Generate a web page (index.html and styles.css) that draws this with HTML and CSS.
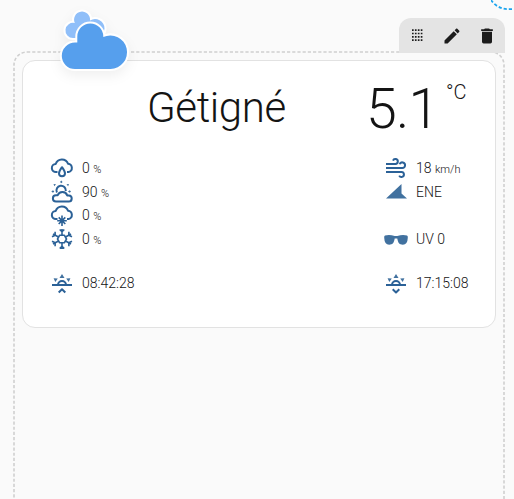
FILE: index.html
```
<!DOCTYPE html>
<html lang="fr">
<head>
  <meta charset="UTF-8" />
  <title>Météo</title>
  <link rel="stylesheet" href="styles.css">
</head>
<body>

<!-- Shared shapes -->
<svg class="defs" width="0" height="0">
  <defs>
    <path id="cloud" d="M7.5 16H6a4 4 0 0 1-.3-8A6.5 6.5 0 0 1 18 7.7 4.2 4.2 0 0 1 18.5 16H17" />
    <g id="sun-line">
      <path d="M2 14h20M8 14a4 4 0 0 1 8 0" />
      <path class="solid" d="M12 3l2.500 4H9.500zM3.600 7.300l4.200.3-2.500 3.500zM20.400 7.300l-4.200.3 2.500 3.500z" />
    </g>
  </defs>
</svg>

<svg class="add-section" width="23" height="11"><path d="M0 0A21 21 0 0 0 16 9.200H23" /></svg>

<div class="section">
  <svg class="outline" width="492" height="470"><rect x="1" y="1" width="490" height="520" rx="13" /></svg>

  <!-- Edit buttons -->
  <div class="toolbar">
    <svg width="20" height="20" viewBox="0 0 24 24"><path d="M6 4h2v2H6zM9.500 4h2v2h-2zM13 4h2v2h-2zM16.500 4h2v2h-2zM6 8h2v2H6zM9.500 8h2v2h-2zM13 8h2v2h-2zM16.500 8h2v2h-2zM6 12h2v2H6zM9.500 12h2v2h-2zM13 12h2v2h-2zM16.500 12h2v2h-2zM6 16h2v2H6zM9.500 16h2v2h-2zM13 16h2v2h-2zM16.500 16h2v2h-2z" /></svg>
    <svg width="20" height="20" viewBox="0 0 24 24"><path d="M20.71 7.04c.39-.39.39-1.04 0-1.41l-2.34-2.34c-.37-.39-1.02-.39-1.41 0l-1.84 1.83 3.75 3.75M3 17.25V21h3.75L17.81 9.93l-3.75-3.75z" /></svg>
    <svg width="20" height="20" viewBox="0 0 24 24"><path d="M19 4h-3.5l-1-1h-5l-1 1H5v2h14M6 19a2 2 0 0 0 2 2h8a2 2 0 0 0 2-2V7H6z" /></svg>
  </div>

  <div class="card">
    <svg class="weather" width="90" height="90" viewBox="0 0 90 90">
      <path class="back" d="M23 38a7.6 7.6 0 1 1 1.8-15A8 8 0 1 1 40 20.5 9.5 9.5 0 0 1 54.5 28.5 9.5 9.5 0 0 1 45 38z" />
      <path class="front" d="M25 69a13.200 13.200 0 0 1 0-26.400h2.300V36.500a13 13 0 0 1 26 0v.4a16.800 16.800 0 1 1 7.200 32.100z" />
    </svg>

    <div class="header">
      <div class="city">Gétigné</div>
      <div class="temp">5.1</div>
      <div class="unit">°C</div>
    </div>

    <div class="details">
      <ul class="left">
        <li>
          <svg class="icon" viewBox="0 0 24 24"><use href="#cloud" /><path d="M12 11.2c-1.8 2.5-3 4.1-3 6a3 3 0 0 0 6 0c0-1.9-1.2-3.5-3-6z" /></svg>
          <span>0 <small>%</small></span>
        </li>
        <li>
          <svg class="icon" viewBox="0 0 24 24"><path d="M6 21.500h12.500a3 3 0 0 0 .3-6.100h-1.600a5 5 0 0 0-9.500-.1H6a3.100 3.100 0 0 0 0 6.200zM6.900 12.500a4.700 4.700 0 1 1 8.900-1.500" /><path class="solid" d="M10 2l1.300-1.500L12.600 2l-1.300 1.300zM3.500 4l2.500.3-1.600 1.900zM19 4l-2.500.3 1.600 1.900zM1.300 11.500L3 10.200l1.300 1.300L3 12.800zM18 11.500l1.700-1.300 1.300 1.300-1.300 1.300z" /></svg>
          <span>90 <small>%</small></span>
        </li>
        <li>
          <svg class="icon" viewBox="0 0 24 24"><use href="#cloud" /><path class="thin" d="M12 12.500v10.500M7.200 17.700h9.600M8.700 14.400l6.600 6.600M15.300 14.400l-6.600 6.600" /></svg>
          <span>0 <small>%</small></span>
        </li>
        <li>
          <svg class="icon thin" viewBox="0 0 24 24"><path d="M12 2v6M12 16v6M3 7l5.500 3M15.500 14l5.500 3M3 17l5.500-3M15.500 10L21 7M9.700 8.200h4.600l2.200 3.800-2.200 3.800H9.700L7.500 12zM9.700 2.500L12 4.800l2.300-2.300M9.700 21.500l2.300-2.300 2.300 2.300M2 9.800l3.200-1.600-.1-3.500M22 9.800l-3.200-1.600.1-3.500M2 14.200l3.200 1.600-.1 3.500M22 14.200l-3.200 1.600.1 3.500" /></svg>
          <span>0 <small>%</small></span>
        </li>
        <li class="sun">
          <svg class="icon" viewBox="0 0 24 24"><use href="#sun-line" /><path d="M8.700 21.500L12 18.300l3.300 3.200" /></svg>
          <span>08:42:28</span>
        </li>
      </ul>

      <ul class="right">
        <li>
          <svg class="icon" viewBox="0 0 24 24"><path d="M2 8h9.500A2.500 2.500 0 1 0 9 4.600M2 12h16.300a2.800 2.800 0 1 0-2.700-3.700M2 16h15.500a2.500 2.500 0 1 1-2.300 3.600" /></svg>
          <span>18 <small>km/h</small></span>
        </li>
        <li>
          <svg class="icon filled" viewBox="0 0 24 24"><path d="M2 18.500L17.500 4v9.500L23 18.500z" /></svg>
          <span>ENE</span>
        </li>
        <li class="uv">
          <svg class="icon filled" viewBox="0 0 24 24"><path d="M1 8.500Q5.500 7.300 10.700 9h2.600Q18.500 7.300 23 8.500q1 .5.800 2.200-.3 7-4.900 7c-3.500 0-4.900-1.700-5.600-6.200h-2.600c-.7 4.500-2.100 6.200-5.600 6.200Q.5 17.700.2 10.700 0 9 1 8.500z" /></svg>
          <span>UV 0</span>
        </li>
        <li class="sun">
          <svg class="icon" viewBox="0 0 24 24"><use href="#sun-line" /><path d="M8.700 18.300l3.300 3.200 3.300-3.200" /></svg>
          <span>17:15:08</span>
        </li>
      </ul>
    </div>
  </div>
</div>

</body>
</html>
```
FILE: styles.css
```
    body {
      margin: 0;
      height: 499px;
      overflow: hidden;
      position: relative;
      background-color: #fafafa;
      font-family: Roboto, "Liberation Sans", sans-serif;
      font-weight: 300;
      color: #141414;
    }

    .defs {
      position: absolute;
    }

    .section {
      position: relative;
      box-sizing: border-box;
      width: 492px;
      height: 448px;
      margin: 51px 0 0 13px;
      padding: 9px;
    }

    .outline {
      position: absolute;
      top: 0;
      left: 0;
      height: 448px;
      fill: none;
      stroke: #d0d0d0;
      stroke-width: 1.6px;
      stroke-dasharray: 3.2 2;
    }

    /* corner of the next drop zone */
    .add-section {
      position: absolute;
      top: 0;
      left: 491px;
      fill: none;
      stroke: #1ba4ee;
      stroke-width: 1.8px;
      stroke-dasharray: 3.2 2;
    }

    .toolbar {
      position: absolute;
      top: -33px;
      right: 0;
      width: 106px;
      height: 35px;
      display: flex;
      align-items: center;
      justify-content: space-around;
      background: #e4e4e4;
      border-radius: 12px 12px 0 0;
    }

    .toolbar svg {
      fill: #1c1c1c;
    }

    .card {
      position: relative;
      box-sizing: border-box;
      height: 268px;
      background: #fff;
      border: 1px solid #e2e2e2;
      border-radius: 13px;
    }

    .weather {
      position: absolute;
      top: -61px;
      left: 27px;
      overflow: visible;
      filter: drop-shadow(0 5px 6px rgba(0, 0, 0, 0.06));
    }

    .weather path {
      stroke: #fff;
      stroke-width: 4px;
      paint-order: stroke;
    }

    .back {
      fill: #90bff9;
    }

    .front {
      fill: #569fed;
    }

    .header {
      display: flex;
      height: 94px;
      padding-left: 124px;
    }

    .city {
      width: 219px;
      padding-top: 22px;
      font-size: 42px;
      line-height: 50px;
      letter-spacing: -0.4px;
    }

    .temp {
      width: 80px;
      padding-top: 17px;
      font-size: 55.5px;
      line-height: 64px;
      letter-spacing: -0.8px;
    }

    .unit {
      padding-top: 19px;
      font-size: 20px;
      line-height: 24px;
    }

    .details {
      display: flex;
      justify-content: space-between;
      padding: 1px 26px 0 27px;
    }

    .details ul {
      list-style: none;
      margin: 0;
      padding: 0;
    }

    .details li {
      display: flex;
      align-items: center;
      height: 23.7px;
      font-size: 14px;
      white-space: nowrap;
    }

    .details small {
      font-size: 11px;
    }

    .details .sun {
      margin-top: 20px;
    }

    .details .uv {
      margin-top: 23.7px;
    }

    .right {
      width: 85px;
    }

    .icon {
      width: 24px;
      height: 24px;
      margin-right: 8px;
      flex: none;
      overflow: visible;
      fill: none;
      stroke: #2b6197;
      stroke-width: 2;
      stroke-linejoin: round;
    }

    .thin {
      stroke-width: 1.6;
    }

    .solid,
    .filled {
      fill: #41719f;
      stroke: none;
    }
```
